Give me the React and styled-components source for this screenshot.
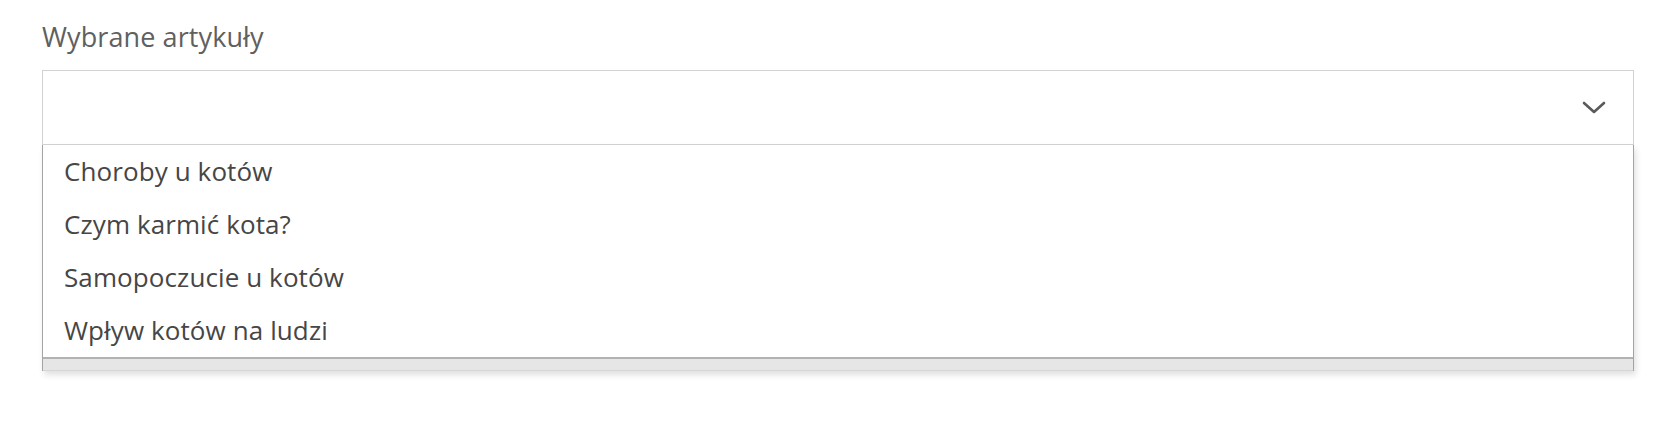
import React from 'react';
import styled, { createGlobalStyle } from 'styled-components';

const articles = [
  'Choroby u kotów',
  'Czym karmić kota?',
  'Samopoczucie u kotów',
  'Wpływ kotów na ludzi',
];

const GlobalStyle = createGlobalStyle`
  body {
    margin: 0;
    background: #ffffff;
    font-family: "Open Sans", "Noto Sans", sans-serif;
  }
`;

const Page = styled.div`
  padding: 21px 38px 0 42px;
  height: 433px;
  box-sizing: border-box;
  overflow: hidden;
`;

const Label = styled.div`
  font-size: 27px;
  line-height: 32px;
  color: #606060;
  margin-bottom: 17px;
  letter-spacing: 0.1px;
`;

const Field = styled.div`
  position: relative;
`;

const SelectBox = styled.div`
  height: 75px;
  box-sizing: border-box;
  border: 1px solid #d2d2d2;
  display: flex;
  align-items: center;
  justify-content: flex-end;
  padding-right: 27px;
`;

const Chevron = () => (
  <svg width="24" height="13" viewBox="0 0 24 13" fill="none">
    <path d="M2 2 L12 11 L22 2" stroke="#5a5a5a" strokeWidth="2.6" strokeLinecap="round" strokeLinejoin="round" />
  </svg>
);

const Popup = styled.div`
  position: absolute;
  top: 75px;
  left: 0;
  right: 0;
  background: #ffffff;
  border-left: 1px solid #a4a4a4;
  border-right: 1px solid #a4a4a4;
  box-shadow: 2px 4px 6px rgba(0, 0, 0, 0.12);
`;

const List = styled.div`
  border-bottom: 2px solid #b2b2b2;
`;

const Item = styled.div`
  height: 53px;
  line-height: 53px;
  padding-left: 21px;
  font-size: 26px;
  letter-spacing: 0.1px;
  color: #464646;
`;

const Band = styled.div`
  height: 11px;
  background: #e6e6e6;
  border-bottom: 1px solid #d6d6d6;
`;

export default function App() {
  return (
    <>
      <GlobalStyle />
      <Page>
        <Label>Wybrane artykuły</Label>
        <Field>
          <SelectBox>
            <Chevron />
          </SelectBox>
          <Popup>
            <List>
              {articles.map((a) => (
                <Item key={a}>{a}</Item>
              ))}
            </List>
            <Band />
          </Popup>
        </Field>
      </Page>
    </>
  );
}
